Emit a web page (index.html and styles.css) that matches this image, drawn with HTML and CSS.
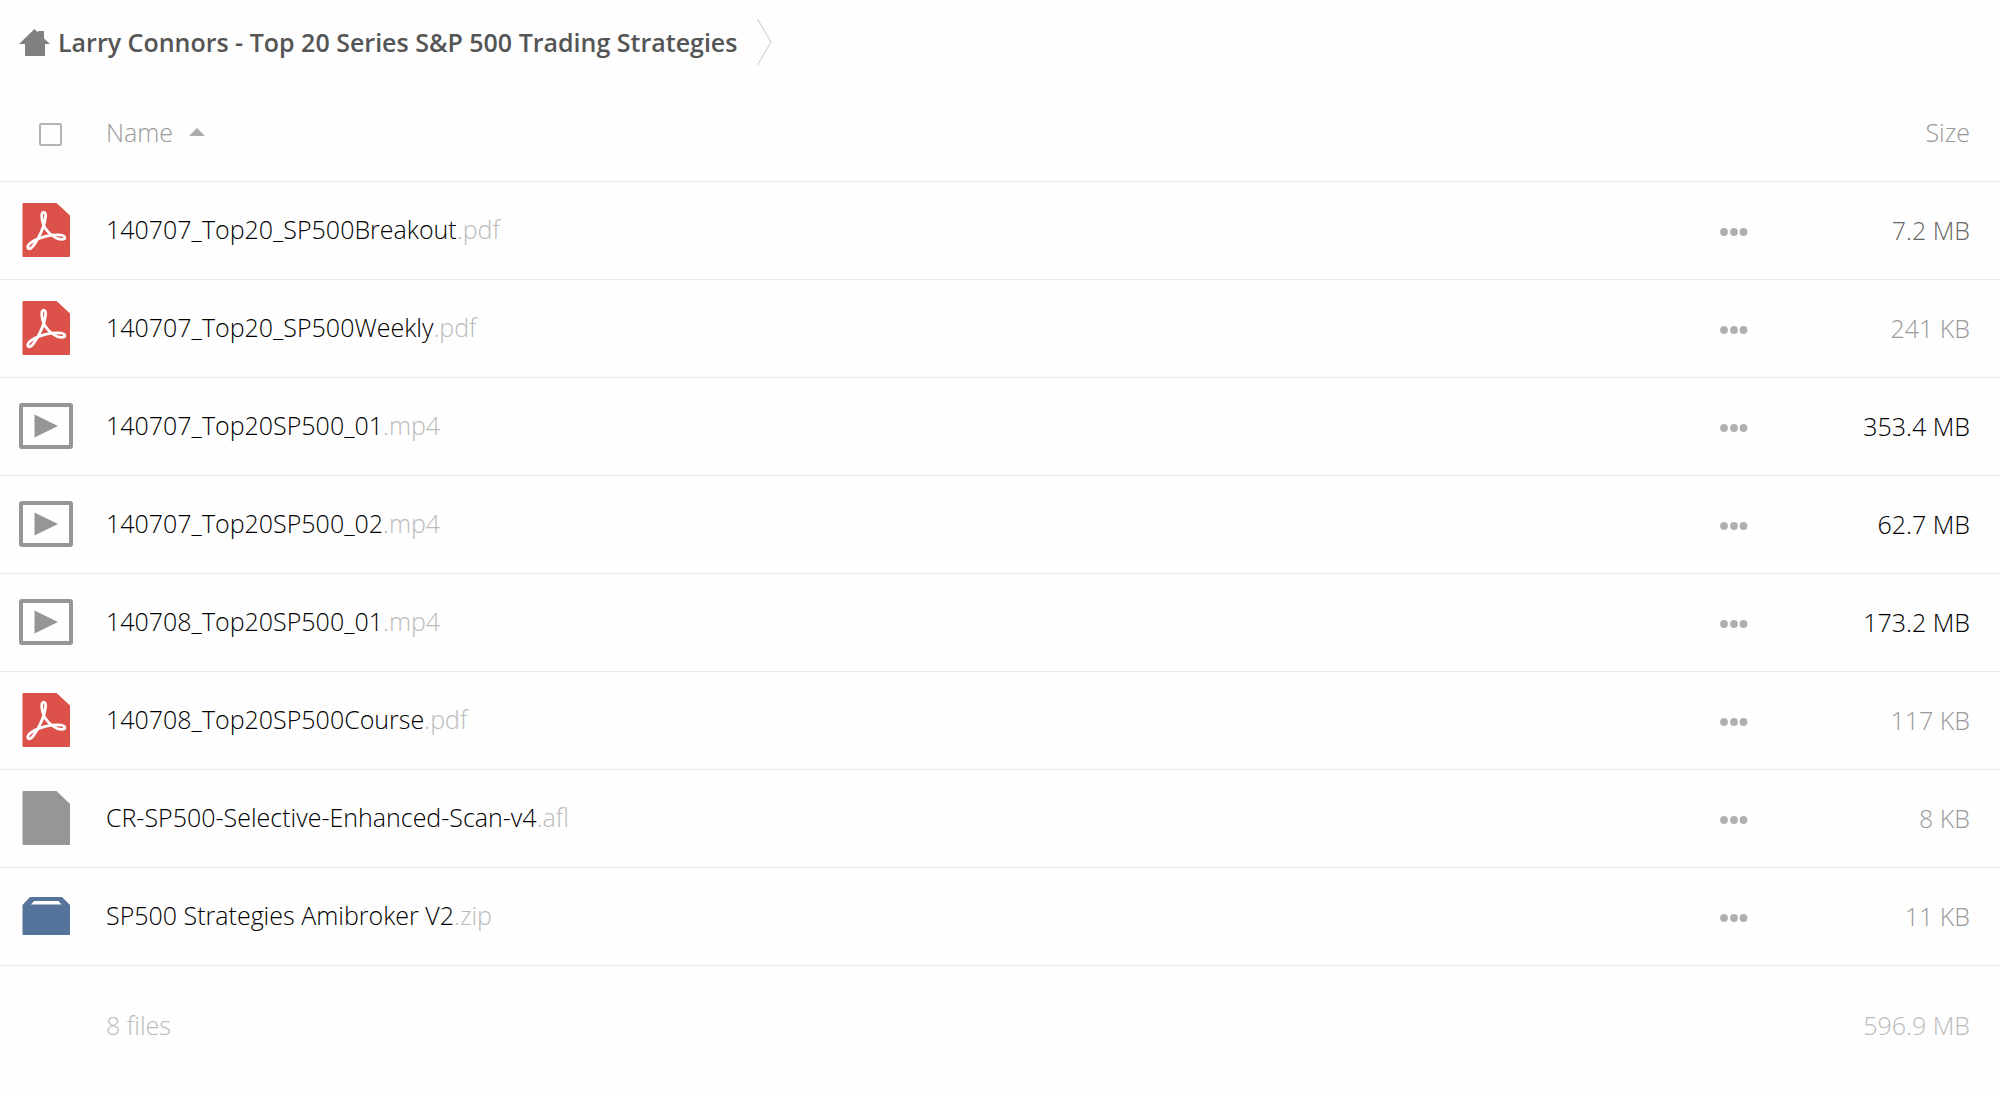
FILE: index.html
```html
<!DOCTYPE html>
<html lang="en">
<head>
<meta charset="utf-8">
<meta name="viewport" content="width=device-width, initial-scale=1">
<title>Larry Connors - Top 20 Series S&amp;P 500 Trading Strategies</title>
<link rel="stylesheet" href="styles.css">
</head>
<body>
<svg class="sprite" aria-hidden="true">
  <symbol id="pdf" viewBox="0 0 54 54">
    <path fill="#dc5149" d="M4.500 0h33L51 12.500V53a1 1 0 0 1-1 1H4.500a1 1 0 0 1-1-1V1a1 1 0 0 1 1-1z"/>
    <path fill="none" stroke="#fff" stroke-width="2.800" stroke-linejoin="round" d="M24.800 9.200C21.800 9.200 22.300 16 24.600 22C26.500 27 32.500 33.500 38.500 35.600C43 37 46.300 36.300 45.800 34.200C45 31 34 31.500 26.500 33.300C19.500 35 10.500 39 8.800 43.500C8.200 46 11 46.800 13.500 43.800C17.500 39 21.500 31 23.800 25C26.500 18 28 9.200 24.800 9.200z"/>
  </symbol>
  <symbol id="video" viewBox="0 0 54 54">
    <rect x="2" y="6" width="50" height="42" rx="1" fill="none" stroke="#969696" stroke-width="4"/>
    <path fill="#969696" d="M15.500 15.500v23L39 27z"/>
  </symbol>
  <symbol id="file" viewBox="0 0 54 54">
    <path fill="#969696" d="M4.500 0h33L51 13v40a1 1 0 0 1-1 1H4.500a1 1 0 0 1-1-1V1a1 1 0 0 1 1-1z"/>
  </symbol>
  <symbol id="archive" viewBox="0 0 54 54">
    <path fill="#56739b" fill-rule="evenodd" d="M11 8h32l8 8v29a1 1 0 0 1-1 1H4.500a1 1 0 0 1-1-1V16zM15 12l-3 3.500h30.500l-3-3.500z"/>
  </symbol>
  <symbol id="dots" viewBox="0 0 28 8">
    <g fill="#b0b0b0"><circle cx="4" cy="4" r="3.900"/><circle cx="14" cy="4" r="3.900"/><circle cx="23.500" cy="4" r="3.900"/></g>
  </symbol>
</svg>

<nav class="path" aria-label="Folder path">
  <a class="path-link" href="#">
    <svg class="home" viewBox="0 0 31 27" aria-hidden="true"><path fill="#808080" d="M0 15L15.500 0l3.500 3.500V2h6v7.500L31 15h-5v12H6V15z"/></svg>
    Larry Connors - Top 20 Series S&amp;P 500 Trading Strategies
  </a>
  <svg class="chevron" viewBox="0 0 15 46" aria-hidden="true"><path fill="none" stroke="#c8c8c8" d="M.5 0L14 23L.5 46"/></svg>
</nav>

<table class="files">
  <thead>
    <tr>
      <th class="icon"><input class="check" type="checkbox" aria-label="Select all"></th>
      <th class="name"><button class="sort" type="button">Name <svg class="arrow" viewBox="0 0 16 8" aria-hidden="true"><path fill="#acacac" d="M0 8L8 0l8 8z"/></svg></button></th>
      <th class="more"></th>
      <th class="size"><button class="sort" type="button">Size</button></th>
    </tr>
  </thead>
  <tbody>
    <tr>
      <td class="icon"><svg class="type"><use href="#pdf"/></svg></td>
      <td class="name"><a href="#">140707_Top20_SP500Breakout<span class="ext">.pdf</span></a></td>
      <td class="more"><button class="menu" type="button" aria-label="More actions"><svg class="dots"><use href="#dots"/></svg></button></td>
      <td class="size medium">7.2 MB</td>
    </tr>
    <tr>
      <td class="icon"><svg class="type"><use href="#pdf"/></svg></td>
      <td class="name"><a href="#">140707_Top20_SP500Weekly<span class="ext">.pdf</span></a></td>
      <td class="more"><button class="menu" type="button" aria-label="More actions"><svg class="dots"><use href="#dots"/></svg></button></td>
      <td class="size small">241 KB</td>
    </tr>
    <tr>
      <td class="icon"><svg class="type"><use href="#video"/></svg></td>
      <td class="name"><a href="#">140707_Top20SP500_01<span class="ext">.mp4</span></a></td>
      <td class="more"><button class="menu" type="button" aria-label="More actions"><svg class="dots"><use href="#dots"/></svg></button></td>
      <td class="size">353.4 MB</td>
    </tr>
    <tr>
      <td class="icon"><svg class="type"><use href="#video"/></svg></td>
      <td class="name"><a href="#">140707_Top20SP500_02<span class="ext">.mp4</span></a></td>
      <td class="more"><button class="menu" type="button" aria-label="More actions"><svg class="dots"><use href="#dots"/></svg></button></td>
      <td class="size">62.7 MB</td>
    </tr>
    <tr>
      <td class="icon"><svg class="type"><use href="#video"/></svg></td>
      <td class="name"><a href="#">140708_Top20SP500_01<span class="ext">.mp4</span></a></td>
      <td class="more"><button class="menu" type="button" aria-label="More actions"><svg class="dots"><use href="#dots"/></svg></button></td>
      <td class="size">173.2 MB</td>
    </tr>
    <tr>
      <td class="icon"><svg class="type"><use href="#pdf"/></svg></td>
      <td class="name"><a href="#">140708_Top20SP500Course<span class="ext">.pdf</span></a></td>
      <td class="more"><button class="menu" type="button" aria-label="More actions"><svg class="dots"><use href="#dots"/></svg></button></td>
      <td class="size small">117 KB</td>
    </tr>
    <tr>
      <td class="icon"><svg class="type"><use href="#file"/></svg></td>
      <td class="name"><a href="#">CR-SP500-Selective-Enhanced-Scan-v4<span class="ext">.afl</span></a></td>
      <td class="more"><button class="menu" type="button" aria-label="More actions"><svg class="dots"><use href="#dots"/></svg></button></td>
      <td class="size small">8 KB</td>
    </tr>
    <tr>
      <td class="icon"><svg class="type"><use href="#archive"/></svg></td>
      <td class="name"><a href="#">SP500 Strategies Amibroker V2<span class="ext">.zip</span></a></td>
      <td class="more"><button class="menu" type="button" aria-label="More actions"><svg class="dots"><use href="#dots"/></svg></button></td>
      <td class="size small">11 KB</td>
    </tr>
  </tbody>
  <tfoot>
    <tr>
      <td class="icon"></td>
      <td class="name">8 files</td>
      <td class="more"></td>
      <td class="size">596.9 MB</td>
    </tr>
  </tfoot>
</table>
</body>
</html>
```
FILE: styles.css
```css
* { box-sizing: border-box; }

body {
  margin: 0;
  background: #fefefe;
  color: #000;
  font: 300 25px/34px "Open Sans", sans-serif;
}

a { color: inherit; text-decoration: none; }

button {
  padding: 0;
  border: 0;
  background: none;
  color: inherit;
  font: inherit;
  cursor: pointer;
}

svg { display: block; }

.sprite { position: absolute; width: 0; height: 0; }

/* Folder path */
.path {
  display: flex;
  align-items: center;
  gap: 20px;
  height: 84px;
  padding-left: 19px;
}

.path-link {
  display: flex;
  align-items: center;
  gap: 8px;
  color: #555;
  font-weight: 600;
}

.home { width: 31px; height: 27px; }
.chevron { width: 15px; height: 46px; }

/* File table */
.files {
  width: 100%;
  table-layout: fixed;
  border-collapse: collapse;
}

th, td {
  height: 98px;
  padding: 0;
  border-bottom: 1px solid #ebebeb;
  font-weight: 300;
  text-align: left;
  vertical-align: middle;
}

thead th { height: 97px; color: #999; }
tfoot td { height: 119px; border: 0; color: #bbb; }

.icon { width: 106px; padding-left: 19px; }
th.icon { padding-left: 39px; }
.more { width: 120px; }
.size { width: 174px; padding-right: 30px; text-align: right; }
tbody .name { padding-bottom: 2px; }
tbody .more { padding-top: 4px; }

.medium { color: #666; }
.small { color: #999; }
.ext { color: #bbb; }

.check {
  display: block;
  width: 23px;
  height: 23px;
  margin: 4px 0 0;
  border: 2px solid #b4b4b4;
  border-radius: 2px;
  appearance: none;
}

.check:checked { background: #b4b4b4; }

.sort { display: inline-flex; align-items: center; gap: 16px; }
.arrow { width: 16px; height: 8px; }

.type { width: 54px; height: 54px; }
.menu { display: block; margin-left: 14px; }
.dots { width: 28px; height: 8px; }
```
